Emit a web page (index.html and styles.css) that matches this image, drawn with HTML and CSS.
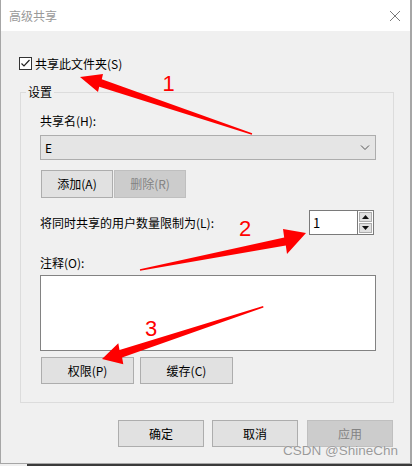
FILE: index.html
```html
<!DOCTYPE html>
<html lang="zh-CN">
<head>
<meta charset="utf-8">
<title>高级共享</title>
<link rel="stylesheet" href="styles.css">
</head>
<body>
<div class="window">
  <div class="titlebar">
    <span class="title">高级共享</span>
    <svg class="close" width="12" height="12" viewBox="0 0 12 12"><path d="M1 1L11 11M11 1L1 11" stroke="#7a7a7a" stroke-width="1" fill="none"/></svg>
  </div>
  <div class="content">
    <label class="check">
      <span class="box"><svg width="11" height="11" viewBox="0 0 11 11"><path d="M1.5 5.5L4 8L9.5 2" stroke="#222" stroke-width="1.2" fill="none"/></svg></span>
      <span>共享此文件夹(S)</span>
    </label>
    <fieldset class="group">
      <legend>设置</legend>
      <div class="label first">共享名(H):</div>
      <div class="combo"><span>E</span><svg width="10" height="6" viewBox="0 0 10 6"><path d="M1 0.5L5 4.5L9 0.5" stroke="#555" stroke-width="1" fill="none"/></svg></div>
      <div class="btnrow tight">
        <button class="btn sm">添加(A)</button>
        <button class="btn sm" disabled>删除(R)</button>
      </div>
      <div class="limit">
        <span>将同时共享的用户数量限制为(L):</span>
        <div class="spin">
          <div class="spin-input">1</div>
          <div class="spin-btns">
            <div class="spin-btn"><svg width="7" height="4" viewBox="0 0 7 4"><path d="M3.5 0L7 4H0Z" fill="#111"/></svg></div>
            <div class="spin-btn"><svg width="7" height="4" viewBox="0 0 7 4"><path d="M0 0H7L3.5 4Z" fill="#111"/></svg></div>
          </div>
        </div>
      </div>
      <div class="label note">注释(O):</div>
      <div class="textarea"></div>
      <div class="btnrow wide">
        <button class="btn md">权限(P)</button>
        <button class="btn md">缓存(C)</button>
      </div>
    </fieldset>
    <div class="footer">
      <button class="btn lg">确定</button>
      <button class="btn lg">取消</button>
      <button class="btn lg apply" disabled>应用</button>
    </div>
  </div>
  <svg class="annot" width="412" height="466" viewBox="0 0 412 466">
    <polygon fill="#ff0000" points="80,77 103,74 101.8,79.2 252.2,133.3 251.8,134.7 99.2,86.8 98,92"/>
    <polygon fill="#ff0000" points="306,233 283,229 284.2,237.6 139.9,269.3 140.1,270.7 285.8,245.4 287,254"/>
    <polygon fill="#ff0000" points="102,359 118.3,343.3 119.5,350 263.1,306 263.5,307.4 122.1,357.6 123.3,364.3"/>
    <text x="168.5" y="91" class="num">1</text>
    <text x="245" y="236" class="num">2</text>
    <text x="151" y="336" class="num">3</text>
  </svg>
  <div class="watermark">CSDN @ShineChn</div>
</div>
<div class="strip"></div>
</body>
</html>
```

FILE: styles.css
```css
* { box-sizing: border-box; }
html, body { margin: 0; padding: 0; }
body {
  background: #f0f0f0;
  font-family: "Noto Sans CJK SC", "Microsoft YaHei", sans-serif;
  font-size: 12px;
  color: #000;
  width: 412px;
  height: 466px;
  overflow: hidden;
}
.window {
  position: relative;
  width: 412px;
  height: 464px;
  background: #f0f0f0;
  border-left: 1px solid #a6a6a6;
  border-right: 2px solid #a6a6a6;
  border-bottom: 1px solid #a6a6a6;
}
.titlebar {
  height: 31px;
  background: #fff;
  display: flex;
  align-items: center;
  justify-content: space-between;
  padding: 0 8px 0 8px;
}
.title {
  color: #999;
  font-size: 12px;
  line-height: 16px;
}
.close { display: block; margin-right: 1px; }
.content {
  padding-top: 25px;
}
.check {
  display: flex;
  align-items: center;
  height: 15px;
  margin-left: 18px;
  line-height: 16px;
}
.box {
  width: 13px;
  height: 13px;
  border: 1px solid #333;
  background: #fff;
  display: flex;
  align-items: center;
  justify-content: center;
  margin-right: 3px;
}
.box svg { display: block; }
.group {
  margin: 13px 0 0 19px;
  width: 374px;
  border: 1px solid #dcdcdc;
  padding: 0 17px 18px 19px;
  min-inline-size: 0;
}
.group legend {
  padding: 0 2px;
  margin-left: -14px;
  line-height: 16px;
  font-size: 12px;
}
.label { line-height: 16px; }
.label.first { margin-top: 13px; }
.combo {
  margin-top: 6px;
  height: 25px;
  width: 100%;
  background: #e5e5e5;
  border: 1px solid #adadad;
  display: flex;
  align-items: center;
  justify-content: space-between;
  padding: 0 5px 0 4px;
}
.combo svg { display: block; }
.btnrow {
  display: flex;
  margin-left: 1px;
}
.btnrow.tight { margin-top: 10px; gap: 1px; }
.btnrow.wide { margin-top: 6px; gap: 6px; }
.btn {
  font-family: "Noto Sans CJK SC", "Microsoft YaHei", sans-serif;
  font-size: 12px;
  color: #000;
  background: #e1e1e1;
  border: 1px solid #adadad;
  border-radius: 0;
  padding: 0;
  margin: 0;
  height: 27px;
  line-height: 16px;
}
.btn:disabled {
  background: #cccccc;
  border-color: #bfbfbf;
  color: #838383;
}
.btn.sm { width: 72px; height: 28px; }
.btn.md { width: 93px; }
.btn.lg { width: 86px; }
.limit {
  margin-top: 12px;
  height: 25px;
  display: flex;
  align-items: center;
  justify-content: space-between;
  line-height: 16px;
}
.spin {
  display: flex;
  height: 25px;
  width: 65px;
  margin-right: 2px;
}
.spin-input {
  flex: 1;
  background: #fff;
  border: 1px solid #7a7a7a;
  border-right: none;
  padding-left: 3px;
  display: flex;
  align-items: center;
  font-size: 13px;
}
.spin-btns {
  width: 17px;
  display: flex;
  flex-direction: column;
  border: 1px solid #7a7a7a;
  background: #fff;
  padding: 1px;
  gap: 1px;
}
.spin-btn {
  flex: 1;
  background: #e1e1e1;
  border: 1px solid #adadad;
  display: flex;
  align-items: center;
  justify-content: center;
}
.spin-btn svg { display: block; }
.label.note { margin-top: 20px; }
.textarea {
  margin-top: 4px;
  width: 100%;
  height: 76px;
  background: #fff;
  border: 1px solid #828282;
}
.footer {
  margin-top: 17px;
  display: flex;
  justify-content: flex-end;
  gap: 8px;
  padding-right: 17px;
}
.footer .apply { margin-left: 1px; }
.annot {
  position: absolute;
  left: -1px;
  top: 0;
  pointer-events: none;
}
.num {
  font-family: "Liberation Sans", Arial, sans-serif;
  font-size: 22px;
  fill: #ff0000;
  text-anchor: middle;
}
.watermark {
  position: absolute;
  left: 282px;
  top: 443px;
  font-family: "Liberation Sans", Arial, sans-serif;
  font-size: 13.5px;
  line-height: 16px;
  color: #9a9a9a;
  text-shadow: 0 0 1px rgba(255,255,255,0.8);
  pointer-events: none;
}
.strip {
  height: 2px;
  margin-left: 27px;
  background: #3a3a3a;
}
```
